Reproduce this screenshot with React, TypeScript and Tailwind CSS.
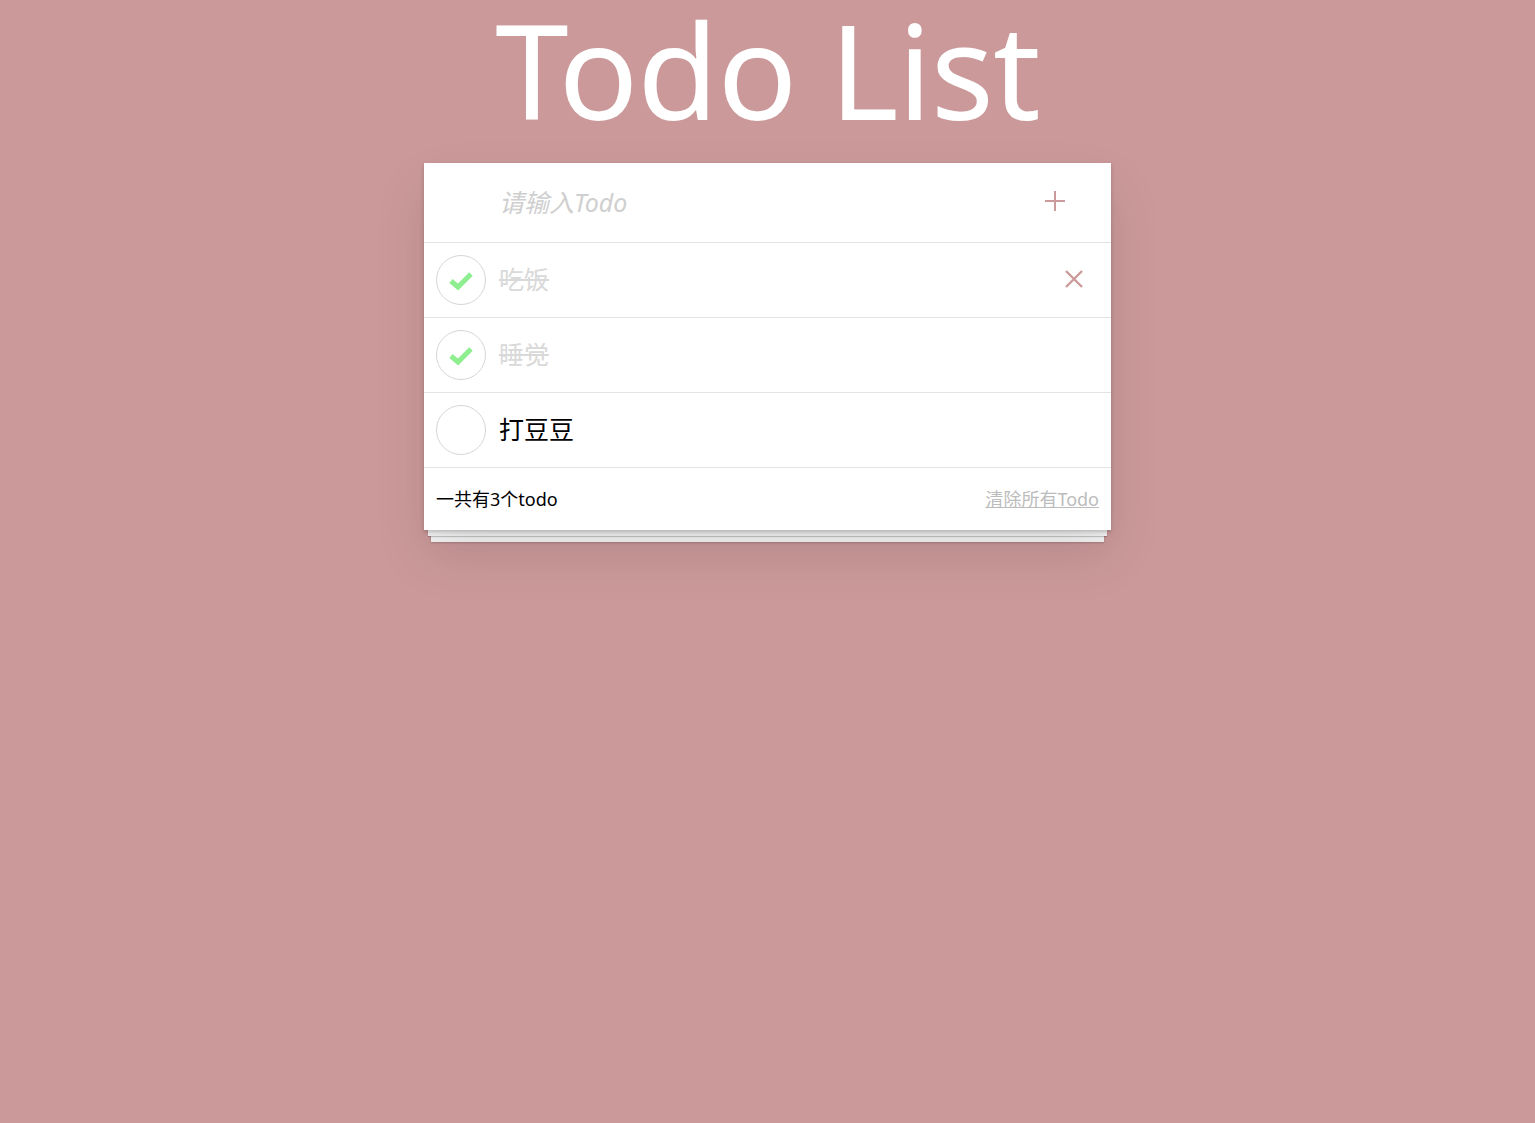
import React from "react";

const FONT = '"Noto Sans", "Noto Sans CJK SC", sans-serif';

type Todo = { text: string; done: boolean; hover?: boolean };

const todos: Todo[] = [
  { text: "吃饭", done: true, hover: true },
  { text: "睡觉", done: true },
  { text: "打豆豆", done: false },
];

function Check() {
  return (
    <svg width="26" height="22" viewBox="0 0 26 22" className="block">
      <path d="M3 12 L10 18 L23 5" fill="none" stroke="#8fee8f" strokeWidth="5" strokeLinecap="butt" strokeLinejoin="miter" />
    </svg>
  );
}

export default function App() {
  return (
    <div className="min-h-[1123px] w-full bg-[#cb999a] pt-[1px]" style={{ fontFamily: FONT }}>
      <h1 className="mb-[26px] text-center text-[132px] leading-[136px] font-normal text-white tracking-[-1px]">
        Todo List
      </h1>
      <div className="mx-auto w-[687px] bg-white shadow-[0_2px_4px_rgba(0,0,0,0.2),0_25px_50px_rgba(0,0,0,0.1),0_10px_0_-4px_#f6f6f6,0_11px_1px_-4px_rgba(0,0,0,0.2),0_19px_0_-7px_#f6f6f6,0_20px_2px_-7px_rgba(0,0,0,0.2)]">
        <div className="flex h-[80px] items-center border-b border-[#e3e3e3] pl-[75px] pr-[45px]">
          <span className="flex-1 text-[25px] italic text-[#cfcfcf]">请输入Todo</span>
          <svg width="22" height="22" viewBox="0 0 22 22" className="mb-[3px]">
            <path d="M11 1 V21 M1 11 H21" stroke="#cc9a9a" strokeWidth="2" />
          </svg>
        </div>
        {todos.map((t) => (
          <div key={t.text} className="flex h-[75px] items-center border-b border-[#e3e3e3] pl-[12px] pr-[27px]">
            <div className="flex h-[50px] w-[50px] shrink-0 items-center justify-center rounded-full border border-[#d6d6d6]">
              {t.done && <Check />}
            </div>
            <span
              className={
                t.done
                  ? "ml-[13px] flex-1 text-[25px] text-[#d9d9d9] line-through"
                  : "ml-[13px] flex-1 text-[25px] text-black"
              }
            >
              {t.text}
            </span>
            {t.hover && (
              <svg width="20" height="20" viewBox="0 0 20 20" className="mb-[2px]">
                <path d="M2 2 L18 18 M18 2 L2 18" stroke="#cc9a9a" strokeWidth="2.4" />
              </svg>
            )}
          </div>
        ))}
        <div className="flex h-[62px] items-center justify-between px-[12px] text-[18px]">
          <span className="text-black">一共有3个todo</span>
          <span className="text-[#bcbcbc] underline">清除所有Todo</span>
        </div>
      </div>
    </div>
  );
}
